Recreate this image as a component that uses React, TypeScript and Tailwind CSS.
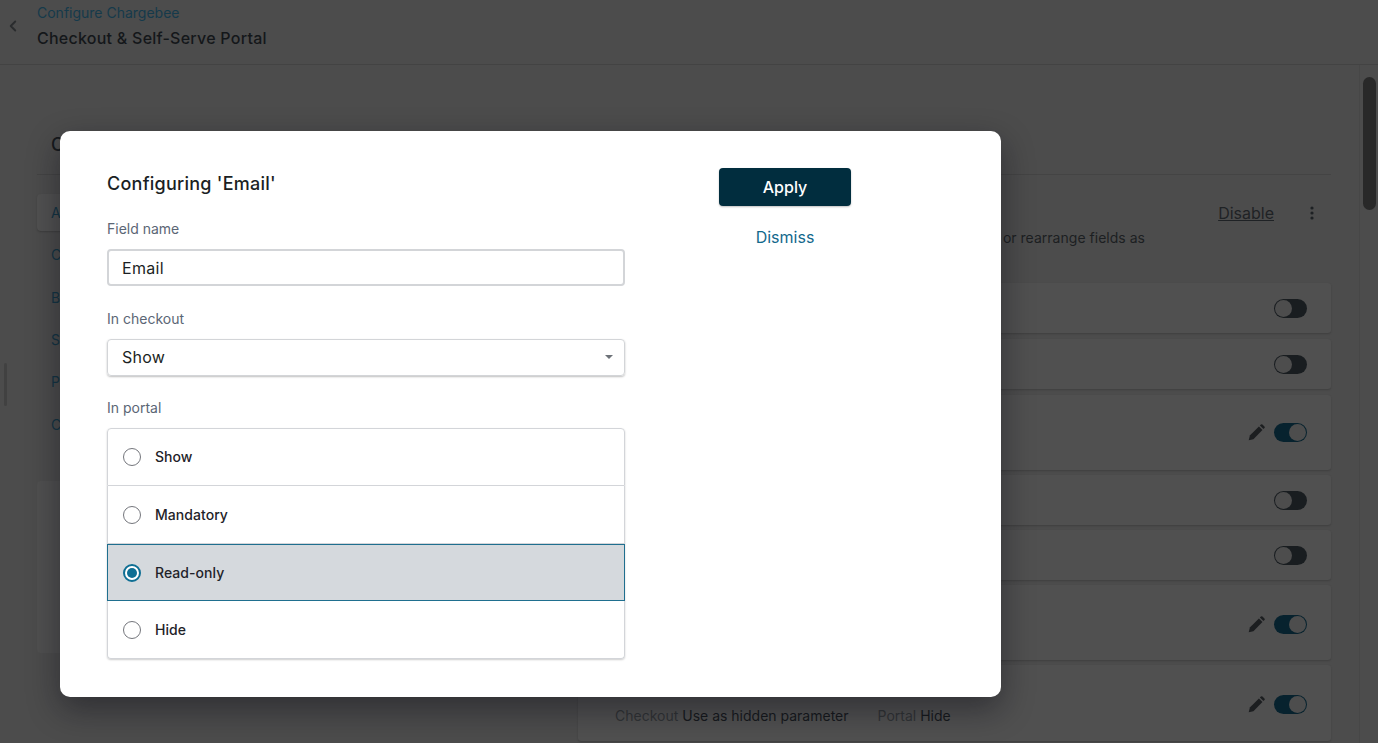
import React from 'react';
import { ChevronLeft } from 'lucide-react';

const Toggle = ({ on }: { on?: boolean }) => (
  <div
    className={`w-[33px] h-[19px] rounded-full p-[1px] flex shrink-0 ${
      on ? 'bg-[#07222e] justify-end' : 'bg-[#191d20] justify-start'
    }`}
  >
    <div className="w-[17px] h-[17px] rounded-full bg-[#4d4d4d]" />
  </div>
);

const Pencil = () => (
  <svg width="17" height="17" viewBox="0 0 24 24" className="fill-[#1c1e20] shrink-0">
    <path d="M1 23l1.6-6.6L15.4 3.6l5 5L7.6 21.4 1 23z" />
    <path d="M16.8 2.2l1.4-1.4a1.6 1.6 0 0 1 2.2 0l2.8 2.8a1.6 1.6 0 0 1 0 2.2l-1.4 1.4-5-5z" />
  </svg>
);

const Row = ({ height, on, edit, children }: { height: string; on?: boolean; edit?: boolean; children?: React.ReactNode }) => (
  <div className={`relative ${height} shrink-0 rounded-[3px] bg-[#505050] shadow-[0_1px_2px_rgba(0,0,0,0.18)] flex items-center justify-end gap-[9px] pr-[24px]`}>
    {edit && <Pencil />}
    <Toggle on={on} />
    {children}
  </div>
);

const Radio = ({ label, selected }: { label: string; selected?: boolean }) => (
  <div
    className={`h-[57.75px] pt-px flex items-center gap-[14px] pl-[15px] first:rounded-t-[4px] first:border-t last:rounded-b-[4px] ${
      selected ? 'relative border bg-[#d5d9dd] border-[#1f6f8f]' : 'border-x border-b border-[#d3d5d9]'
    }`}
  >
    <div
      className={`w-[18px] h-[18px] rounded-full flex items-center justify-center bg-white ${
        selected ? 'border-2 border-[#0f6f94]' : 'border border-[#74767c]'
      }`}
    >
      {selected && <div className="w-[10px] h-[10px] rounded-full bg-[#0f6f94]" />}
    </div>
    <span className="text-sm font-medium tracking-[0.05px] text-[#1f2329]">{label}</span>
  </div>
);

export default function App() {
  return (
    <div className="relative h-[743px] w-[1378px] overflow-hidden bg-[#4c4c4c] font-['Inter',sans-serif]">
      {/* Dimmed page */}
      <header className="h-[65px] border-b border-[#434343] flex items-center">
        <ChevronLeft className="w-[18px] h-[18px] ml-[4px] mr-[10px] -mt-[12px] text-[#2a2c2e]" strokeWidth={2.5} />
        <div className="ml-[5px] -mt-[11px]">
          <div className="text-sm leading-[22px] text-[#153a4b]">Configure Chargebee</div>
          <div className="text-base leading-[28px] font-medium tracking-[0.25px] text-[#14171a]">Checkout &amp; Self-Serve Portal</div>
        </div>
      </header>

      <div className="flex h-[678px]">
        <div className="w-[1360px] border-r border-[#474747] pl-[37px] pr-[28px] relative">
          <div className="h-[110px] border-b border-[#444444] flex items-end pl-[14px] pb-[15px] text-lg font-medium text-[#16191c]">
            Checkout
          </div>
          <div className="flex">
            {/* Sidebar tabs, mostly behind the dialog */}
            <div className="w-[541px] shrink-0 pt-[19px] text-sm text-[#133443]">
              <div className="h-[37px] w-[200px] rounded-[4px] bg-[#515151] shadow-[0_1px_2px_rgba(0,0,0,0.2)] pl-[14px] flex items-center">Attributes</div>
              <div className="pl-[14px] mt-[13px] leading-[22px]">Customer</div>
              <div className="pl-[14px] mt-[21px] leading-[22px]">Billing</div>
              <div className="pl-[14px] mt-[20px] leading-[22px]">Shipping</div>
              <div className="pl-[14px] mt-[20px] leading-[22px]">Payment</div>
              <div className="pl-[14px] mt-[21px] leading-[22px]">Consent</div>
              <div className="mt-[45px] h-[172px] w-[500px] rounded-[4px] bg-[#505050]" />
            </div>

            {/* Field rows */}
            <div className="flex-1 min-w-0">
              <div className="h-[108px] relative">
                <div className="flex justify-end items-center gap-[33px] pt-[26px] pr-[14px]">
                  <span className="text-base text-[#1f2225] underline">Disable</span>
                  <svg width="10" height="14" viewBox="0 0 10 14" className="fill-[#1d2023]">
                    <circle cx="5" cy="2" r="1.6" />
                    <circle cx="5" cy="7" r="1.6" />
                    <circle cx="5" cy="12" r="1.6" />
                  </svg>
                </div>
                <div className="text-right pr-[186px] mt-[2px] text-sm leading-[22px] tracking-[0.02px] text-[#1c1f22]">or rearrange fields as</div>
              </div>
              <div className="flex flex-col gap-[5px]">
                <Row height="h-[50px] mb-px" />
                <Row height="h-[50px] mb-px" />
                <Row height="h-[75px]" on edit />
                <Row height="h-[50px]" />
                <Row height="h-[50px] pt-px" />
                <Row height="h-[75px] pt-[3px]" on edit />
                <Row height="h-[76px] pt-[2px]" on edit>
                  <div className="absolute left-[37px] top-[40px] text-sm leading-[22px] flex gap-[29px] whitespace-nowrap">
                    <span>
                      <span className="text-[#303335]">Checkout </span>
                      <span className="text-[#16191c]">Use as hidden parameter</span>
                    </span>
                    <span>
                      <span className="text-[#303335]">Portal </span>
                      <span className="text-[#16191c]">Hide</span>
                    </span>
                  </div>
                </Row>
              </div>
            </div>
          </div>
          {/* Section handle on the left edge */}
          <div className="absolute left-[4px] top-[298px] w-[3px] h-[43px] rounded-full bg-[#414141]" />
        </div>
        <div className="flex-1 pl-[3px] pt-[12px]">
          <div className="w-[13px] h-[133px] rounded-full bg-[#292929]" />
        </div>
      </div>

      {/* Dialog */}
      <div className="absolute left-[60px] top-[131px] w-[941px] h-[566px] rounded-[10px] bg-white shadow-[0_12px_32px_rgba(10,10,20,0.45)] flex pl-[47px] pt-[37px]">
        <div className="w-[518px] shrink-0">
          <h2 className="text-lg leading-[31px] font-medium tracking-[0.25px] text-[#1b1f24]">Configuring 'Email'</h2>
          <label className="block mt-[19px] text-sm leading-[22px] text-[#5b6675]">Field name</label>
          <div className="mt-[9px] h-[37px] rounded-[4px] border-2 border-[#d3d5d8] flex items-center pl-[13px] text-base tracking-[0.3px] text-[#1b1f24]">Email</div>
          <label className="block mt-[22px] text-sm leading-[22px] text-[#5b6675]">In checkout</label>
          <div className="mt-[9px] h-[37px] pb-px rounded-[4px] border border-[#d3d5d8] shadow-[0_1px_2px_rgba(0,0,0,0.25)] flex items-center justify-between pl-[14px] pr-[11px] text-base tracking-[0.2px] text-[#1b1f24]">
            <span>Show</span>
            <span className="w-0 h-0 border-x-[4px] border-x-transparent border-t-[4px] border-t-[#6d7278]" />
          </div>
          <label className="block mt-[21px] text-sm leading-[22px] text-[#5b6675]">In portal</label>
          <div className="mt-[9px] rounded-[4px] shadow-[0_1px_2px_rgba(0,0,0,0.2)]">
            <Radio label="Show" />
            <Radio label="Mandatory" />
            <Radio label="Read-only" selected />
            <Radio label="Hide" />
          </div>
        </div>
        <div className="ml-[94px] w-[132px]">
          <button className="w-full h-[38px] rounded-[4px] bg-[#012d3e] text-base font-medium text-white shadow-[0_1px_2px_rgba(0,0,0,0.25)]">Apply</button>
          <div className="mt-[19px] text-center text-base leading-[24px] text-[#12688c]">Dismiss</div>
        </div>
      </div>
    </div>
  );
}
